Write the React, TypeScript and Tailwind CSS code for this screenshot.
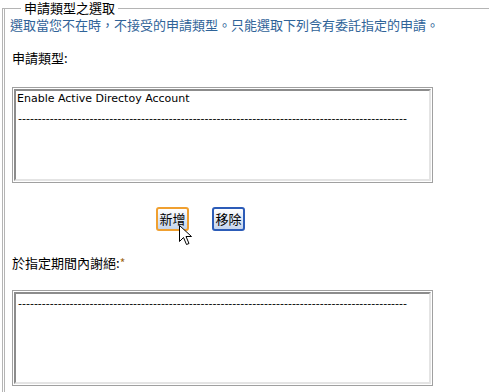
const cjk = "font-['Noto_Sans_CJK_TC','Noto_Sans',sans-serif]";
const latin = "font-['DejaVu_Sans','Noto_Sans_CJK_TC',sans-serif]";

const DASHES = "-".repeat(98);

function ListBox({ items }: { items: string[] }) {
  return (
    <div className="w-[421px] h-[96px] border border-[#a0a0a0] bg-white p-px">
      <div className="h-full border-2 border-t-[#8c8c8c] border-l-[#8c8c8c] border-r-[#e4e4e4] border-b-[#e4e4e4] bg-white">
        {items.map((item, i) =>
          item === "-" ? (
            <div
              key={i}
              className={`h-[16px] leading-[16px] pt-[2px] pl-[2px] text-[11px] text-black whitespace-nowrap ${latin}`}
            >
              {DASHES}
            </div>
          ) : (
            <div
              key={i}
              className={`h-[16px] leading-[16px] pl-px text-[11px] text-black mb-[2px] ${latin}`}
            >
              {item}
            </div>
          )
        )}
      </div>
    </div>
  );
}

function Cursor() {
  return (
    <svg width="14" height="21" viewBox="0 0 14 21" className="absolute left-[179px] top-[225px]">
      <path
        d="M0.5 0.5 L0.5 16.5 L4.5 12.5 L7.5 19.5 L10 18.5 L7 11.5 L12.5 11.5 Z"
        fill="#fff"
        stroke="#000"
        strokeWidth="1"
        strokeLinejoin="miter"
      />
    </svg>
  );
}

export default function App() {
  return (
    <div className={`relative w-[489px] h-[392px] overflow-hidden bg-white pt-px ${cjk}`}>
      <fieldset className="ml-[2px] min-w-0 border-0 border-t border-l-[3px] border-double border-[#b4b4b4] pl-[5px] pb-4">
        <legend className="ml-[11px] px-[3px] text-[13px] leading-[14px] text-black">
          申請類型之選取
        </legend>
        <p className="mt-[2px] text-[13px] leading-4 text-[#2f6398] whitespace-nowrap">
          選取當您不在時，不接受的申請類型。只能選取下列含有委託指定的申請。
        </p>

        <p className="mt-[17px] pl-[2px] text-[13px] leading-4 text-black">申請類型:</p>

        <div className="mt-[21px] pl-[2px]">
          <ListBox items={["Enable Active Directoy Account", "-"]} />
        </div>

        <div className="mt-[24px] flex gap-[23px] pl-[146px]">
          <button className="w-[33px] h-[24px] rounded-[3px] border-2 border-[#f0a030] bg-gradient-to-b from-white to-[#c4d4ec] text-[13px] leading-4 text-black">
            新增
          </button>
          <button className="w-[33px] h-[24px] rounded-[3px] border-2 border-[#2c5cb8] bg-gradient-to-b from-white to-[#c4d4ec] text-[13px] leading-4 text-black">
            移除
          </button>
        </div>

        <p className="mt-[24px] pl-[2px] text-[13px] leading-4 text-black">
          於指定期間內謝絕:<span className="text-[12px] align-top text-[#a06818]">*</span>
        </p>

        <div className="mt-[19px] pl-[2px]">
          <ListBox items={["-"]} />
        </div>
      </fieldset>
      <Cursor />
    </div>
  );
}
